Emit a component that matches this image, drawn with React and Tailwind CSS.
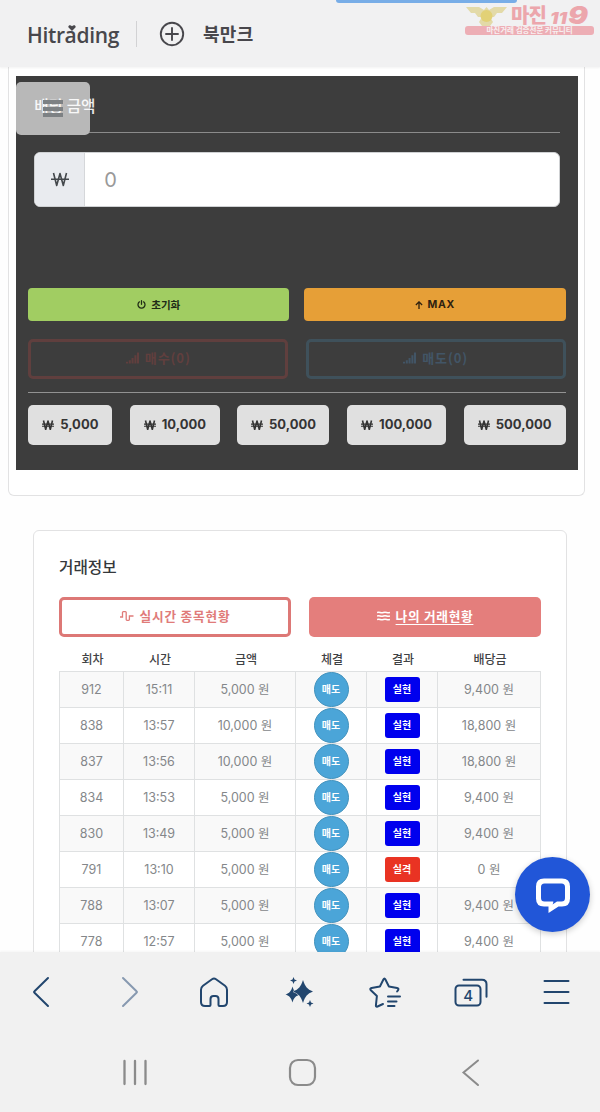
import clsx from 'clsx';

const AMOUNTS = [
  { label: '5,000', width: 'w-[84px]' },
  { label: '10,000', width: 'w-[90px]' },
  { label: '50,000', width: 'w-[92px]' },
  { label: '100,000', width: 'w-[99px]' },
  { label: '500,000', width: 'w-[102px]' },
];

const TRADES = [
  { round: 912, time: '15:11', amount: '5,000', payout: '9,400', win: true },
  { round: 838, time: '13:57', amount: '10,000', payout: '18,800', win: true },
  { round: 837, time: '13:56', amount: '10,000', payout: '18,800', win: true },
  { round: 834, time: '13:53', amount: '5,000', payout: '9,400', win: true },
  { round: 830, time: '13:49', amount: '5,000', payout: '9,400', win: true },
  { round: 791, time: '13:10', amount: '5,000', payout: '0', win: false },
  { round: 788, time: '13:07', amount: '5,000', payout: '9,400', win: true },
  { round: 778, time: '12:57', amount: '5,000', payout: '9,400', win: true },
];

const COLS = 'grid grid-cols-[64px_71px_101px_71px_71px_103px]';

const SignalIcon = () => (
  <svg className="w-[13px] h-[12px]" viewBox="0 0 14 12" fill="currentColor">
    <path d="M0 10h2.200v2H0zM3 8.500h2.200V12H3zM6 6h2.200v6H6zM9 3h2.200v9H9zM11.800 0H14v12h-2.200z" />
  </svg>
);

const WonIcon = () => (
  <svg className="w-3 h-[10px]" viewBox="0 0 12 10" fill="none" stroke="currentColor" strokeWidth="1.600" strokeLinejoin="round">
    <path d="M1.500.5l2.200 9L6 1l2.300 8.500L10.500.5" />
    <path d="M0 4.100h12M0 6.300h12" strokeWidth="1.100" />
  </svg>
);

const Header = () => (
  <header className="relative z-10 h-[67px] shrink-0 bg-[#f1f1f2] flex items-start shadow-[0_1px_2px_rgba(0,0,0,0.05)] text-[#48474c]">
    <div className="relative ml-[27px] mt-[19px] w-[93px] h-8 text-[21px] leading-8 font-semibold font-['Open_Sans','Noto_Sans',sans-serif] tracking-[-0.35px] whitespace-nowrap">
      Hitrading
      <svg className="absolute left-[41px] top-[6px] w-[8px] h-[6px]" viewBox="0 0 8 6" fill="currentColor">
        <path d="M4 6L.6 2.6C-.5 1 1.8-1 4 1.2 6.2-1 8.5 1 7.4 2.6z" />
      </svg>
    </div>
    <div className="ml-4 mt-[21px] w-px h-[26px] bg-[#d2d2d4]" />
    <svg className="ml-[22px] mt-[21px] w-[26px] h-[26px]" viewBox="0 0 26 26" fill="none" stroke="currentColor" strokeWidth="1.9" strokeLinecap="round">
      <circle cx="13" cy="13" r="11.2" />
      <path d="M13 7v12M7 13h12" />
    </svg>
    <div className="ml-[18px] mt-[17px] text-[18px] leading-8 font-bold tracking-[0.3px]">북만크</div>

    {/* loading bar at the very top */}
    <div className="absolute left-[336px] top-0 w-[181px] h-[3px] rounded-b-full bg-[#78ade7]" />

    {/* watermark */}
    <div className="absolute left-[465px] top-[4px] w-[130px]">
      <div className="h-[22px] flex items-start">
        <svg className="w-[43px] h-[22px]" viewBox="0 0 43 22" fill="#e3daa8">
          <path d="M1 3h13l5 3 2.500-3 2.500 3 5-3h13l-5 6h-5l-3 4h-4l3 5-3 4H17l-3-4 3-5h-4l-3-4H6z" />
          <circle cx="21.500" cy="12" r="6" fill="#e2d176" />
        </svg>
        <span className="ml-[3px] text-[20px] leading-[21px] font-black text-[#eca6ac] tracking-[-0.8px] whitespace-nowrap">마진</span>
        <svg className="ml-[4px] w-[40px] h-[22px] overflow-visible" viewBox="0 0 40 22" fill="#eca6ac" fontFamily="Inter, sans-serif" fontWeight="900" fontStyle="italic">
          <text x="0" y="20" fontSize="16" textLength="17" lengthAdjust="spacingAndGlyphs">11</text>
          <text x="18" y="20" fontSize="25" textLength="20" lengthAdjust="spacingAndGlyphs">9</text>
        </svg>
      </div>
      <div className="h-[9px] w-[129px] rounded-[3px] bg-[#edaeb5] text-center text-[7.500px] leading-[8px] font-bold text-[#f8f0f1] whitespace-nowrap">
        마진거래 검증전문 커뮤니티
      </div>
    </div>
  </header>
);

const BetPanel = () => (
  <section className="ml-[8px] w-[577px] h-[429px] pl-[6.700px] pt-[9px] border border-t-0 border-[#e2e2e3] rounded-b-md bg-white">
    <div className="relative w-[562.600px] h-[394px] bg-[#3d3d3d] flex flex-col px-[12.600px]">
      <div className="mx-[6px] h-[57px] shrink-0 border-b border-[#8b8b8b] pt-[18px] text-[15.700px] leading-6 font-medium">
        <span className="relative z-10 text-white/90">배당 금액</span>
      </div>

      {/* floating menu handle over the title */}
      <div className="absolute left-0 top-[6px] w-[74.500px] h-[53px] rounded-[5px] bg-[#b8b8b8]" />
      <div className="absolute z-20 left-[27px] top-[24px] w-5 h-[17px] flex flex-col justify-between">
        <div className="h-[4px] bg-[#7d8184]" />
        <div className="h-[4px] bg-[#7d8184]" />
        <div className="h-[4px] bg-[#7d8184]" />
      </div>

      <div className="mx-[6px] mt-[19px] h-[55px] shrink-0 rounded-md bg-white border border-[#cfd1d3] flex overflow-hidden">
        <div className="w-[50px] bg-[#e9ebef] border-r border-[#d5d7da] flex items-center justify-center text-[#44484c]">
          <svg className="w-[18px] h-[15px]" viewBox="0 0 18 15" fill="none" stroke="currentColor" strokeWidth="1.600" strokeLinejoin="round">
            <path d="M2.500 1l3.200 12.500L9 1.500l3.300 12L15.500 1" />
            <path d="M0 7.200h18" strokeWidth="1.500" />
          </svg>
        </div>
        <div className="pl-[19px] text-[20px] leading-[55px] text-[#999] font-['Inter',sans-serif]">0</div>
      </div>

      <div className="mt-[81px] flex justify-between">
        <button className="w-[261px] h-[33px] rounded-[4px] bg-[#a1cd62] text-[#202b16] text-[10.500px] font-bold flex items-center justify-center gap-[5px]">
          <svg className="w-[9px] h-[9px]" viewBox="0 0 10 10" fill="none" stroke="currentColor" strokeWidth="1.4" strokeLinecap="round">
            <path d="M5 .8v4M2.700 2a3.900 3.900 0 1 0 4.600 0" />
          </svg>
          초기화
        </button>
        <button className="w-[262px] h-[33px] rounded-[4px] bg-[#e69f37] text-[#2f2210] text-[10.500px] font-bold font-['Inter',sans-serif] tracking-[0.6px] flex items-center justify-center gap-[5px]">
          <svg className="w-[8px] h-[8px]" viewBox="0 0 9 9" fill="none" stroke="currentColor" strokeWidth="1.5">
            <path d="M4.500 9V1M1 4.500L4.500 1 8 4.500" />
          </svg>
          MAX
        </button>
      </div>

      <div className="mt-[18px] flex justify-between">
        <button className="w-[260px] h-[40px] rounded-[5px] border-[3px] border-[#603f3e] pb-[2px] text-[#613f3e] text-[13px] font-bold tracking-[0.9px] flex items-center justify-center gap-[6px]">
          <SignalIcon />매수(0)
        </button>
        <button className="w-[260px] h-[40px] rounded-[5px] border-[3px] border-[#3f515b] pb-[2px] text-[#425566] text-[13px] font-bold tracking-[0.9px] flex items-center justify-center gap-[6px]">
          <SignalIcon />매도(0)
        </button>
      </div>

      <div className="mt-[13px] h-px shrink-0 bg-[#929292]" />

      <div className="mt-3 flex justify-between">
        {AMOUNTS.map(a => (
          <button key={a.label} className={clsx(a.width, 'h-10 rounded-[5px] bg-[#e0e0e0] text-[#343434] text-[13px] font-bold font-["Inter",sans-serif] flex items-center justify-center gap-[6px] whitespace-nowrap')}>
            <WonIcon />
            {a.label}
          </button>
        ))}
      </div>
    </div>
  </section>
);

const TradeInfo = () => (
  <section className="mt-[34px] ml-[33px] w-[534px] h-[500px] shrink-0 border border-[#e2e2e3] rounded-md bg-white px-[25px] pt-[24px]">
    <h2 className="text-[15.700px] leading-6 font-medium text-[#35383b]">거래정보</h2>
    <div className="mt-[18px] flex justify-between">
      <button className="w-[232px] h-10 rounded-[5px] border-[3px] border-[#dd7876] pb-[2px] text-[#e07b79] text-[12.700px] font-bold tracking-[0.8px] flex items-center justify-center gap-[6px]">
        <svg className="w-[14px] h-[10px]" viewBox="0 0 14 10" fill="none" stroke="currentColor" strokeWidth="1.3">
          <path d="M0 6h2.500V1.500A.8.8 0 0 1 3.300.7h2.100a.8.8 0 0 1 .8.8v7a.8.8 0 0 0 .8.8h1.600a.8.8 0 0 0 .8-.8V5H13.500" />
        </svg>
        실시간 종목현황
      </button>
      <button className="w-[232px] h-10 rounded-[5px] bg-[#e47e7c] pb-[2px] text-white text-[12.700px] font-bold tracking-[0.7px] flex items-center justify-center gap-[6px]">
        <svg className="w-[13px] h-[10px]" viewBox="0 0 13 10" fill="none" stroke="currentColor" strokeWidth="1.5">
          <path d="M0 1.500q1.600-.7 3.200 0t3.200 0 3.200 0 3.400 0M0 5q1.600-.7 3.200 0t3.200 0 3.200 0 3.400 0M0 8.500q1.600-.7 3.200 0t3.200 0 3.200 0 3.400 0" />
        </svg>
        <span className="underline underline-offset-[3px]">나의 거래현황</span>
      </button>
    </div>

    <div className={clsx(COLS, 'mt-[11px] h-[22.700px] text-[12px] leading-[22px] font-medium text-[#3f4245] text-center')}>
      {['회차', '시간', '금액', '체결', '결과', '배당금'].map(h => (
        <div key={h} className="pl-[3px]">{h}</div>
      ))}
    </div>
    <div className="w-[482px] border-l border-t border-[#dfe1e2]">
      {TRADES.map((t, i) => (
        <div key={t.round} className={clsx(COLS, 'h-[36.100px] text-[12.500px] leading-[35px] text-[#84878a] text-center font-["Inter","Noto_Sans_CJK_KR",sans-serif] *:border-r *:border-b *:border-[#dfe1e2]', i % 2 === 0 ? 'bg-[#f9f9f9]' : 'bg-white')}>
          <div>{t.round}</div>
          <div>{t.time}</div>
          <div>{t.amount} 원</div>
          <div className="flex items-center justify-center">
            <span className="w-[35px] h-[35px] shrink-0 rounded-full bg-[#4ba5d8] border border-[#4292bd] text-white text-[10px] leading-[33px] font-bold">매도</span>
          </div>
          <div className="flex items-center justify-center">
            <span className={clsx('w-[35px] h-[25px] rounded-[3px] text-white text-[10px] leading-[24px] font-bold', t.win ? 'bg-[#0000ee]' : 'bg-[#e93323]')}>{t.win ? '실현' : '실격'}</span>
          </div>
          <div>{t.payout} 원</div>
        </div>
      ))}
    </div>
  </section>
);

const NavIcon = ({ children, className }) => (
  <svg className={clsx('w-11 h-11', className)} viewBox="0 0 44 44" fill="none" stroke="currentColor" strokeWidth="2" strokeLinecap="round" strokeLinejoin="round">
    {children}
  </svg>
);

const BottomBars = () => (
  <footer className="relative h-[160px] shrink-0 bg-[#f1f1f1] shadow-[0_-1px_2px_rgba(0,0,0,0.04)]">
    <nav className="pt-[18px] pl-[19px] pr-[21px] flex justify-between text-[#22466e]">
      <NavIcon><path d="M29 8L15.500 21.300q-.9.700 0 1.400L29 36" /></NavIcon>
      <NavIcon className="text-[#8799b0]"><path d="M18 8l13.500 13.300q.9.700 0 1.400L18 36" /></NavIcon>
      <NavIcon>
        <path d="M21 9.300q2-1.400 4 0l9 6.500q2 1.500 2 4V32q0 4-4 4h-3.500q-1 0-1-1v-6q0-3-3-3h-2q-3 0-3 3v6q0 1-1 1H14q-4 0-4-4V19.800q0-2.500 2-4z" />
      </NavIcon>
      <NavIcon>
        <g fill="currentColor" stroke="none">
          <path d="M15.500 16.500c1.500 5 3 6.500 8 8-5 1.500-6.500 3-8 8-1.500-5-3-6.500-7-8 4-1.500 5.500-3 7-8z" />
          <path d="M26 10c2.500 7 4 9 10 11.500-6 2.500-7.500 4.500-10 11.500-2.500-7-4-9-10-11.500 6-2.500 7.500-4.500 10-11.500z" stroke="#f1f1f1" strokeWidth="1" paintOrder="stroke" />
          <path d="M16.500 7l1 2.500 2.500 1-2.500 1-1 2.500-1-2.500-2.500-1 2.500-1zM33 30l1 2.500 2.500 1-2.500 1-1 2.500-1-2.500-2.500-1 2.500-1z" />
        </g>
      </NavIcon>
      <NavIcon>
        <path d="M20 34l-5.500 2.500q-1.800.6-1.600-1.200l1-9.300-6.300-6q-1-1.600 1-2l8.300-1.500 3.500-7q1-2 2 0l3.500 7 8.200 1.500q2 .4 1 2.200l-1 1.300M25 26.500H37M25 31.500h8.500M25 36h6.500" />
      </NavIcon>
      <svg className="w-11 h-11" viewBox="0 0 44 44" fill="none" stroke="currentColor" strokeWidth="2" strokeLinecap="round">
        <rect x="6.500" y="15.500" width="25" height="20" rx="3.500" />
        <path d="M14.500 9.800h18.500q4.500 0 4.500 4.500v12.500" />
        <text x="19.200" y="31" fill="currentColor" stroke="none" textAnchor="middle" className="text-[15px] font-medium font-['Inter',sans-serif]">4</text>
      </svg>
      <NavIcon><path d="M9.500 11h24M9.500 22h24M9.500 33h24" /></NavIcon>
    </nav>
    <nav className="mt-[38px] pl-[115px] pr-[109px] flex justify-between text-[#8b8b8b]">
      <svg className="w-10 h-10" viewBox="0 0 40 40" fill="none" stroke="currentColor" strokeWidth="2.300" strokeLinecap="round"><path d="M9.500 9v23M20 9v23M30.500 9v23" /></svg>
      <svg className="w-10 h-10" viewBox="0 0 40 40" fill="none" stroke="currentColor" strokeWidth="2.200"><rect x="7" y="8" width="25" height="25" rx="8" /></svg>
      <svg className="w-10 h-10" viewBox="0 0 40 40" fill="none" stroke="currentColor" strokeWidth="2" strokeLinecap="round"><path d="M27 8.500L12.500 20.500 27 33" /></svg>
    </nav>
  </footer>
);

export default function App() {
  return (
    <div className="relative w-[600px] h-[1112px] overflow-hidden flex flex-col bg-[#fefefe] font-['Noto_Sans_CJK_KR',sans-serif]">
      <Header />
      <main className="h-[885px] shrink-0 overflow-hidden">
        <BetPanel />
        <TradeInfo />
      </main>
      <BottomBars />

      {/* live chat bubble */}
      <button className="absolute z-20 left-[515px] top-[857px] w-[75px] h-[75px] rounded-full bg-[#2156d8] shadow-[0_2px_6px_rgba(0,0,0,0.2)] flex items-center justify-center">
        <svg className="w-[36px] h-[38px]" viewBox="0 0 36 38" fill="none">
          <path d="M9 2.500h18q8 0 8 8v12q0 8-8 8h-3.500L13.500 37v-6.500H9q-8 0-8-8v-12q0-8 8-8z" fill="#fff" />
          <path d="M9.500 7.500h17q3.500 0 3.500 3.500v11q0 3.500-3.500 3.500H22L17.500 28.500q1-1.500.8-3H9.500Q6 25.500 6 22V11q0-3.500 3.500-3.500z" fill="#2156d8" />
        </svg>
      </button>
    </div>
  );
}
